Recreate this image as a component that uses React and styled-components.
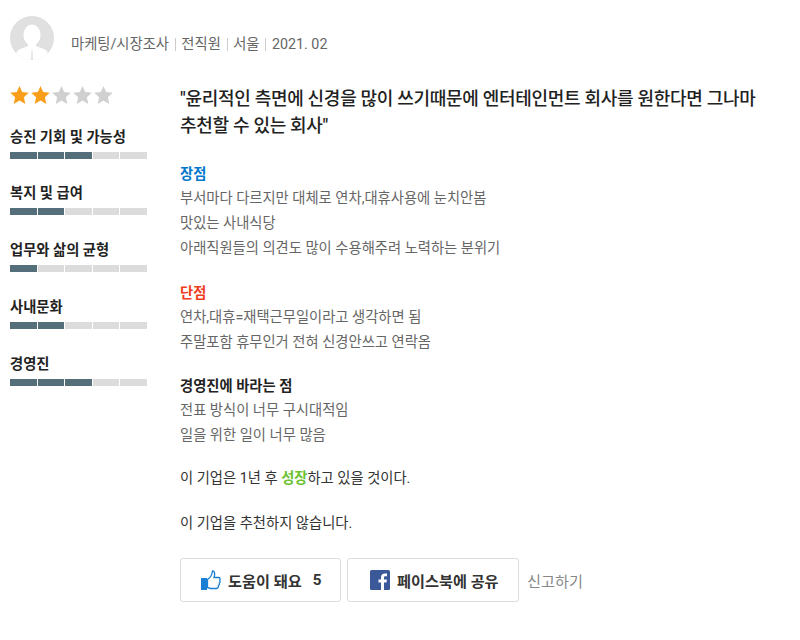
import React from "react";
import styled, { createGlobalStyle } from "styled-components";

const Global = createGlobalStyle`
  html, body { margin: 0; padding: 0; background: #fff; }
  body { font-family: Roboto, "Noto Sans CJK KR", sans-serif; }
`;
const Page = styled.div`
  width: 800px; height: 640px; box-sizing: border-box; padding: 16px 0 0 10px; overflow: hidden;
`;
const Header = styled.div`display: flex; align-items: flex-end; height: 44px;`;
const Avatar = styled.div`width: 44px; height: 44px; border-radius: 50%; overflow: hidden; flex: none;`;
const Meta = styled.div`
  margin-left: 17px; font-size: 14.3px; line-height: 20px; color: #666; display: flex; align-items: center; padding-bottom: 6px;
`;
const Sep = styled.span`width: 1px; height: 13px; background: #ccc; margin: 0 5.700px 0 5.700px;`;
const Body = styled.div`display: flex; margin-top: 25px;`;
const Side = styled.div`width: 137px; flex: none;`;
const Stars = styled.div`display: flex; align-items: center; gap: 2px; height: 20px; margin-bottom: 21.500px;`;
const Metric = styled.div`height: 56.750px;`;
const MetricLabel = styled.div`font-size: 14.3px; font-weight: 700; line-height: 20px; color: #222;`;
const Bar = styled.div`display: flex; gap: 1px; margin-top: 5px; height: 7px;`;
const Seg = styled.div`flex: 1; background: ${p => (p.$on ? "#546e7a" : "#dcdcdc")};`;
const Main = styled.div`margin-left: 33px; width: 590px; flex: none;`;
const Title = styled.h2`margin: 0; font-size: 18px; font-weight: 500; line-height: 27px; color: #222; letter-spacing: -0.3px;`;
const Section = styled.div`margin-top: ${p => p.$mt}px;`;
const Heading = styled.div`font-size: 14.3px; font-weight: 700; line-height: 24px; color: ${p => p.$c || "#222"};`;
const Line = styled.div`font-size: 14.3px; line-height: 25px; color: #666;`;
const Plain = styled.div`font-size: 14.3px; line-height: 25px; color: #333; margin-top: ${p => p.$mt}px;`;
const Grow = styled.b`color: #6cc22f; font-weight: 700;`;
const Actions = styled.div`display: flex; align-items: center; gap: 6px; margin-top: 22px;`;
const Btn = styled.button`
  height: 44px; width: ${p => p.$w}px; box-sizing: border-box; border: 1px solid #ddd; border-radius: 3px; background: #fff;
  display: flex; align-items: center; justify-content: flex-start; gap: 7px; padding: 0 0 0 ${p => p.$pl}px;
  font: 700 15.2px Roboto, "Noto Sans CJK KR", sans-serif; color: #333;
`;
const Count = styled.span`margin-left: 4px;`;
const Report = styled.span`font-size: 15.2px; color: #888; margin-left: 2px;`;

const Star = ({ on }) => (
  <svg width="19" height="18" viewBox="0 0 17 16"><path fill={on ? "#f99e1b" : "#d0d0d0"} d="M8.500 0l2.400 5.400 5.900.6-4.400 4 1.300 6-5.200-3.100L3.300 16l1.300-6L.2 6l5.900-.6z"/></svg>
);
const metrics = [["승진 기회 및 가능성",3],["복지 및 급여",2],["업무와 삶의 균형",1],["사내문화",2],["경영진",3]];

export default function App() {
  return (
    <Page>
      <Global />
      <Header>
        <Avatar>
          <svg width="44" height="44" viewBox="0 0 44 44">
            <rect width="44" height="44" fill="#e0e0e0"/>
            <ellipse cx="22" cy="19" rx="8.500" ry="10.500" fill="#fff"/>
            <path d="M18 27h8v3l9 3.500c3 2 4 6 4 10.500H5c0-4.500 1-8.500 4-10.500l9-3.500z" fill="#fff"/>
            <path d="M21.500 34h1l.6 10h-2.200z" fill="#e4e4e4"/>
          </svg>
        </Avatar>
        <Meta>마케팅/시장조사<Sep />전직원<Sep />서울<Sep />2021. 02</Meta>
      </Header>
      <Body>
        <Side>
          <Stars>{[1,2,3,4,5].map(i => <Star key={i} on={i<=2} />)}</Stars>
          {metrics.map(([l,n]) => (
            <Metric key={l}>
              <MetricLabel>{l}</MetricLabel>
              <Bar>{[1,2,3,4,5].map(i => <Seg key={i} $on={i<=n} />)}</Bar>
            </Metric>
          ))}
        </Side>
        <Main>
          <Title>"윤리적인 측면에 신경을 많이 쓰기때문에 엔터테인먼트 회사를 원한다면 그나마 추천할 수 있는 회사"</Title>
          <Section $mt={23}>
            <Heading $c="#0077cc">장점</Heading>
            <Line>부서마다 다르지만 대체로 연차,대휴사용에 눈치안봄</Line>
            <Line>맛있는 사내식당</Line>
            <Line>아래직원들의 의견도 많이 수용해주려 노력하는 분위기</Line>
          </Section>
          <Section $mt={20}>
            <Heading $c="#f03c1e">단점</Heading>
            <Line>연차,대휴=재택근무일이라고 생각하면 됨</Line>
            <Line>주말포함 휴무인거 전혀 신경안쓰고 연락옴</Line>
          </Section>
          <Section $mt={19}>
            <Heading>경영진에 바라는 점</Heading>
            <Line>전표 방식이 너무 구시대적임</Line>
            <Line>일을 위한 일이 너무 많음</Line>
          </Section>
          <Plain $mt={18}>이 기업은 1년 후 <Grow>성장</Grow>하고 있을 것이다.</Plain>
          <Plain $mt={20}>이 기업을 추천하지 않습니다.</Plain>
          <Actions>
            <Btn $w={161} $pl={20}>
              <svg width="20" height="20" viewBox="0 0 20 20">
                <rect x="0" y="8" width="6" height="12" fill="#1a7fd4"/>
                <path d="M6.500 9.500c2.500-1.500 4.500-4 5-8.500 2.300 0 2.800 2.800 1.500 6.500h4.500c1.700 0 1.900 1.800 1.200 2.800.7.900.5 2.200-.4 2.700.4 1 0 2-.8 2.400.2 1.200-.5 3.100-1.800 3.100H9.500c-1.300 0-2-.8-3-1z" fill="#fff" stroke="#1a7fd4" strokeWidth="1.300"/>
              </svg>
              도움이 돼요<Count>5</Count>
            </Btn>
            <Btn $w={172} $pl={22}>
              <svg width="20" height="20" viewBox="0 0 20 20">
                <rect width="20" height="20" rx="1.500" fill="#3b5998"/>
                <path d="M14 20v-7.500h2.500l.4-3H14V7.700c0-.9.300-1.400 1.500-1.400H17V3.600c-.3 0-1.200-.1-2.200-.1-2.300 0-3.800 1.400-3.800 3.800v2.200H8.500v3H11V20z" fill="#fff"/>
              </svg>
              페이스북에 공유
            </Btn>
            <Report>신고하기</Report>
          </Actions>
        </Main>
      </Body>
    </Page>
  );
}
